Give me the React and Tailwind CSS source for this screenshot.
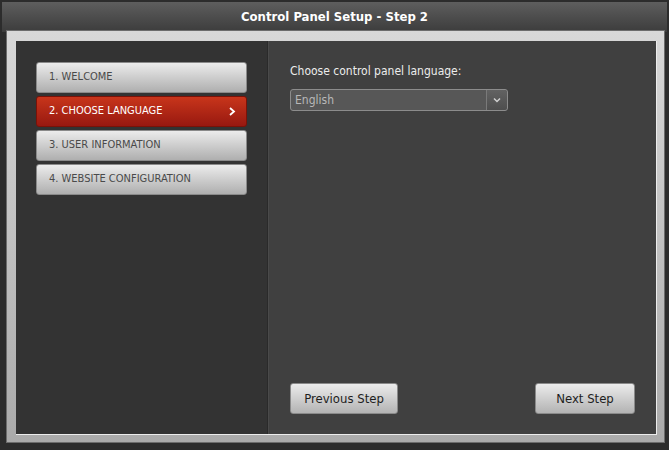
import React from "react";

const steps = [
  { label: "1. WELCOME" },
  { label: "2. CHOOSE LANGUAGE", active: true },
  { label: "3. USER INFORMATION" },
  { label: "4. WEBSITE CONFIGURATION" },
];

const font = { fontFamily: '"DejaVu Sans Condensed", "DejaVu Sans", sans-serif' };

const StepButton = ({ label, active }) => {
  if (active) {
    return (
      <div className="w-[211px] h-[31px] rounded-[3px] flex items-center justify-between pl-[12px] pr-[10px] bg-gradient-to-b from-[#c8351b] to-[#981810] border border-[#7a1208] text-white text-[11px]">
        <span>{label}</span>
        <svg width="8" height="9" viewBox="0 0 8 9">
          <polyline points="2,1 6,4.5 2,8" fill="none" stroke="#ffffff" strokeWidth="1.8" />
        </svg>
      </div>
    );
  }
  return (
    <div className="w-[211px] h-[31px] rounded-[3px] flex items-center pl-[12px] bg-gradient-to-b from-[#ececec] to-[#afafaf] border border-[#8a8a8a] text-[#4a4a4a] text-[11px]">
      {label}
    </div>
  );
};

const ActionButton = ({ children, width }) => (
  <button
    className={`${width} h-[31px] rounded-[3px] bg-gradient-to-b from-[#ececec] to-[#b3b3b3] border border-[#8a8a8a] text-[#1e1e1e] text-[13px] flex items-center justify-center`}
    style={font}
  >
    {children}
  </button>
);

export default function App() {
  return (
    <div className="w-[669px] h-[450px] bg-[#2c2c2c] flex flex-col overflow-hidden" style={font}>
      {/* title bar */}
      <div className="h-[30px] mx-[2px] mt-[2px] bg-gradient-to-b from-[#5e5e5e] to-[#3c3c3c] flex items-center justify-center text-white font-bold text-[13px]">
        Control Panel Setup - Step 2
      </div>

      {/* frame */}
      <div className="ml-[6px] w-[659px] h-[413px] -mt-[2px] border border-[#6c6c6c] bg-gradient-to-b from-[#d8d8d8] to-[#aaaaaa] pl-[9px] pt-[10px] pr-[7px] pb-[7px]">
        <div className="w-[641px] h-[394px] flex border-r border-b border-[#ececec]">
          {/* sidebar */}
          <div className="w-[252px] bg-[#333333] border-r border-[#2a2a2a] pt-[21px] pl-[20px] flex flex-col gap-[3px]">
            {steps.map((s) => (
              <StepButton key={s.label} label={s.label} active={s.active} />
            ))}
          </div>

          {/* content */}
          <div className="flex-1 bg-[#404040] border-l border-[#4a4a4a] flex flex-col justify-between pl-[21px] pr-[21px] pt-[23px] pb-[20px]">
            <div>
              <div className="text-[#ececec] text-[12px] leading-[15px]">Choose control panel language:</div>
              <div className="mt-[10px] w-[218px] h-[22px] rounded-[3px] border border-[#8c8c8c] bg-[#575757] flex items-stretch">
                <div className="flex-1 flex items-center pl-[4px] text-[#b8b8b8] text-[12px]">English</div>
                <div className="w-[21px] border-l border-[#7a7a7a] bg-gradient-to-b from-[#626262] to-[#4e4e4e] flex items-center justify-center rounded-r-[3px]">
                  <svg width="8" height="6" viewBox="0 0 8 6">
                    <polyline points="1,1.5 4,4.5 7,1.5" fill="none" stroke="#d0d0d0" strokeWidth="1.5" />
                  </svg>
                </div>
              </div>
            </div>

            <div className="flex justify-between items-end">
              <ActionButton width="w-[108px]">Previous Step</ActionButton>
              <ActionButton width="w-[100px]">Next Step</ActionButton>
            </div>
          </div>
        </div>
      </div>
    </div>
  );
}
